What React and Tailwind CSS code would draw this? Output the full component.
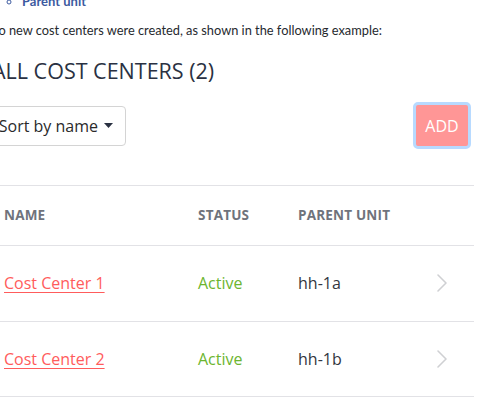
import React from "react";

function Chevron() {
  return (
    <svg width="12" height="20" viewBox="0 0 12 20" fill="none">
      <path d="M2 2 L10 10 L2 18" stroke="#cfd0d3" strokeWidth="1.6" strokeLinecap="round" strokeLinejoin="round" />
    </svg>
  );
}

const rows = [
  { name: "Cost Center 1", status: "Active", parent: "hh-1a" },
  { name: "Cost Center 2", status: "Active", parent: "hh-1b" },
];

export default function App() {
  return (
    <div className="w-[500px] h-[401px] overflow-hidden bg-white relative">
      <div className="ml-[-15px] w-[489px]">
        <ul className="h-[14px] mt-[-6px] pl-[37px] list-[circle] text-[13px] leading-[14px] font-bold text-[#3c5aa0]" style={{ fontFamily: "Lato, 'Open Sans', sans-serif" }}>
          <li>Parent unit</li>
        </ul>
        <p className="mt-[13px] ml-[-3px] h-[18px] text-[12.8px] leading-[18px] text-[#26292e] whitespace-nowrap" style={{ fontFamily: "Lato, 'Liberation Sans', sans-serif" }}>
          Two new cost centers were created, as shown in the following example:
        </p>
        <div style={{ fontFamily: "'Open Sans', sans-serif" }}>
          <h2 className="pl-[7px] mt-[17px] h-[30px] text-[21.5px] leading-[30px] text-[#2a3142] whitespace-nowrap">ALL COST CENTERS (2)</h2>
          <div className="mt-[16px] flex items-center justify-between pr-[3px]">
            <div className="h-[40px] w-[141px] border border-[#d4d4d4] rounded-[4px] flex items-center justify-end pr-[12px] gap-[6px] text-[16px] text-[#2a2a2a]">
              <span>Sort by name</span>
              <svg width="9" height="5" viewBox="0 0 9 5"><path d="M0 0 L9 0 L4.5 5 Z" fill="#2a3142" /></svg>
            </div>
            <button className="h-[47px] w-[58px] rounded-[5px] border-[3px] border-[#b8daff] bg-[#ff9696] text-white text-[16px] flex items-center justify-center">
              ADD
            </button>
          </div>
          <div className="mt-[36px] ml-[15px] w-[474px] border-t border-[#e2e2e6]">
            <div className="h-[60px] flex items-center border-b border-[#e2e2e6] text-[13.5px] font-bold text-[#6f737c] tracking-[0.2px]">
              <div className="w-[198px] pl-[4px]">NAME</div>
              <div className="w-[100px]">STATUS</div>
              <div className="flex-1">PARENT UNIT</div>
            </div>
            {rows.map((r) => (
              <div key={r.name} className="h-[75.5px] flex items-center border-b border-[#e2e2e6] text-[16px]">
                <div className="w-[198px] pl-[4px]">
                  <a href="#" className="text-[#ff5c5c] underline underline-offset-[3px] decoration-[1px]">{r.name}</a>
                </div>
                <div className="w-[100px] text-[#6cb52f]">{r.status}</div>
                <div className="w-[138px] text-[#333640]">{r.parent}</div>
                <Chevron />
              </div>
            ))}
          </div>
        </div>
      </div>
    </div>
  );
}
